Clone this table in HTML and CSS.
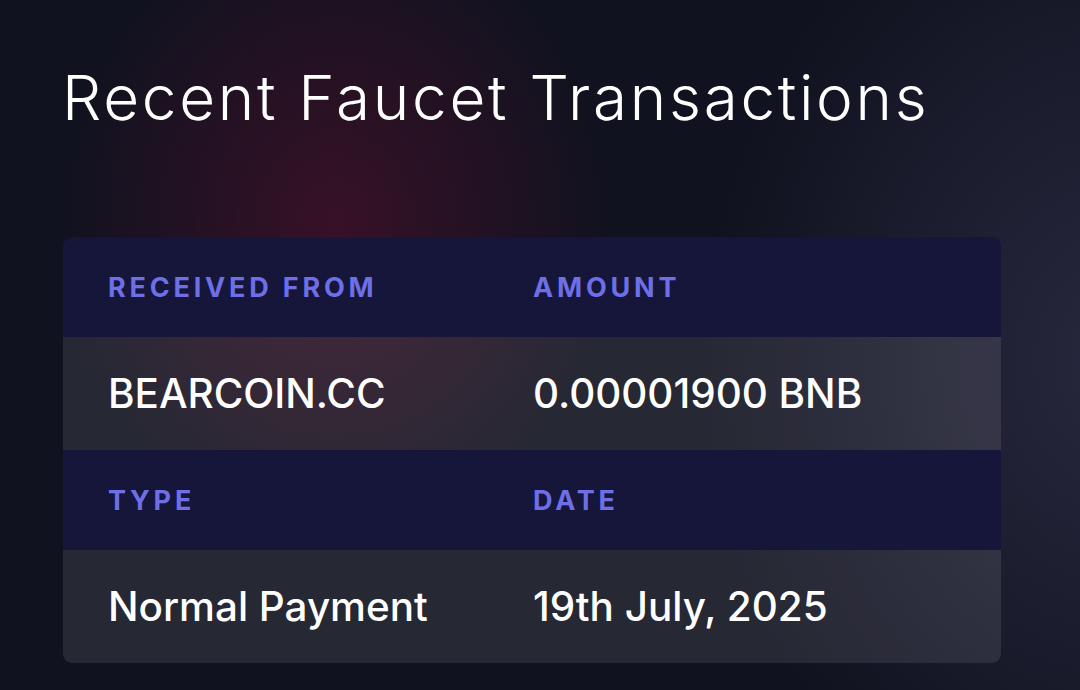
FILE: index.html
```html
<!DOCTYPE html>
<html lang="en">
<head>
<meta charset="utf-8">
<title>Recent Faucet Transactions</title>
<link rel="stylesheet" href="styles.css">
</head>
<body>
<main class="page">
  <h1 class="title">Recent Faucet Transactions</h1>
  <section class="card">
    <div class="row head">
      <div class="cell">RECEIVED FROM</div>
      <div class="cell">AMOUNT</div>
    </div>
    <div class="row data">
      <div class="cell">BEARCOIN.CC</div>
      <div class="cell">0.00001900 BNB</div>
    </div>
    <div class="row head">
      <div class="cell">TYPE</div>
      <div class="cell">DATE</div>
    </div>
    <div class="row data">
      <div class="cell">Normal Payment</div>
      <div class="cell">19th July, 2025</div>
    </div>
  </section>
</main>
</body>
</html>
```
FILE: styles.css
```css
html, body {
  margin: 0;
  height: 100%;
}
body {
  background-color: #10121f;
  background-image:
    radial-gradient(ellipse 280px 320px at 335px 220px, rgba(82, 16, 44, 0.6), rgba(82, 16, 44, 0) 100%),
    radial-gradient(ellipse 420px 520px at 1120px 360px, rgba(60, 58, 88, 0.55), rgba(60, 58, 88, 0) 100%);
  font-family: Inter, "Noto Sans", sans-serif;
  color: #ffffff;
  overflow: hidden;
}
.page {
  padding: 60px 79px 0 63px;
}
.title {
  margin: 0 0 0 -1px;
  font-weight: 300;
  font-size: 62px;
  line-height: 76px;
  letter-spacing: 2.7px;
  color: #ffffff;
}
.card {
  margin-top: 101px;
  width: 938px;
  border-radius: 9px;
  overflow: hidden;
}
.row {
  display: grid;
  grid-template-columns: 425px 1fr;
  padding-left: 45px;
}
.head {
  background: #15163a;
  height: 100px;
  align-items: center;
  font-weight: 700;
  font-size: 27px;
  letter-spacing: 3.8px;
  color: #6e6fe6;
}
.data {
  background: rgba(255, 255, 255, 0.095);
  height: 113px;
  align-items: center;
  font-weight: 500;
  font-size: 40.4px;
  color: #ffffff;
}
```
